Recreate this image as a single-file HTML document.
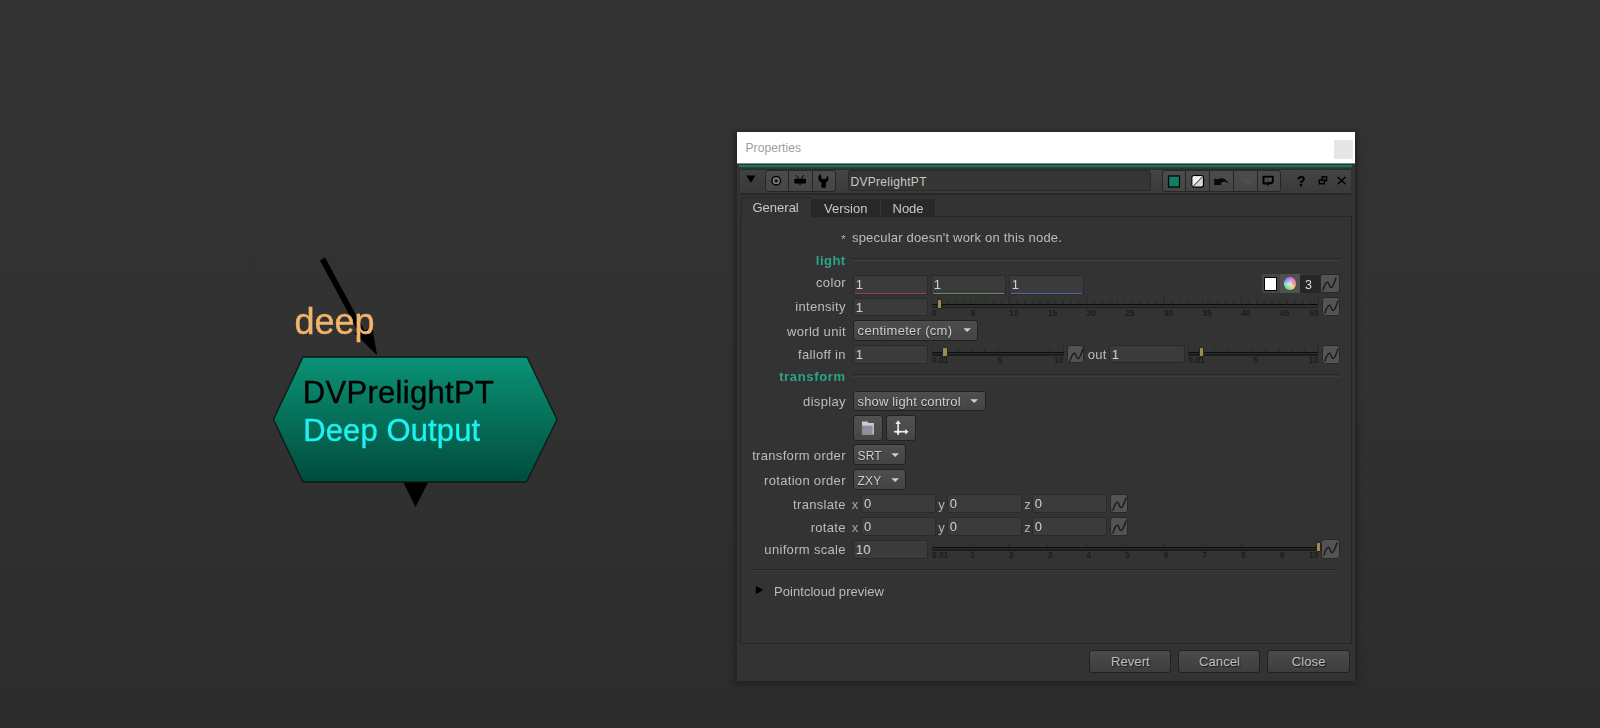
<!DOCTYPE html>
<html><head><meta charset="utf-8"><style>
html,body{margin:0;padding:0;}
body{width:1600px;height:728px;overflow:hidden;background:linear-gradient(#333333 0%,#323232 45%,#2c2c2c 100%);position:relative;font-family:'Liberation Sans', sans-serif;}
#wrap>div,#wrap>svg{position:absolute;}
</style></head><body><div id="wrap" style="position:absolute;left:0;top:0;width:1600px;height:728px;filter:blur(0.35px)">
<svg style="left:0;top:0" width="1600" height="728" viewBox="0 0 1600 728">
<defs><linearGradient id="ng" x1="0" y1="0" x2="0" y2="1">
<stop offset="0" stop-color="#0a9376"/><stop offset="1" stop-color="#004c3c"/></linearGradient></defs>
<line x1="322.5" y1="259" x2="364" y2="336" stroke="#000" stroke-width="5.8"/>
<polygon points="354,333 372.5,328 377,355" fill="#000"/>
<polygon points="303,357 527,357 557,419.5 526.5,482 303,482 273.5,419.5" fill="url(#ng)" stroke="#0d1a16" stroke-width="1.3"/>
<polygon points="403.5,482.5 428,482.5 415.5,507" fill="#000"/>
</svg>
<div style="top:303.80px;font:normal 36px/1 'Liberation Sans', sans-serif;color:#f2b46a;letter-spacing:0px;white-space:nowrap;-webkit-text-stroke:0.4px #f2b46a;left:294.50px;">deep</div>
<div style="top:376.70px;font:normal 31px/1 'Liberation Sans', sans-serif;color:#000;letter-spacing:0.3px;white-space:nowrap;-webkit-text-stroke:0.35px #000;left:302.80px;">DVPrelightPT</div>
<div style="top:415.00px;font:normal 31px/1 'Liberation Sans', sans-serif;color:#20f0f0;letter-spacing:0.1px;white-space:nowrap;-webkit-text-stroke:0.35px #20f0f0;left:303.30px;">Deep Output</div>
<div style="left:732.50px;top:131.00px;width:625.50px;height:553.50px;background:#2b2b2b;filter:blur(1px);border-radius:2px"></div>
<div style="left:737.00px;top:132.00px;width:618.00px;height:549.00px;background:#333333;box-shadow:0 2px 8px rgba(0,0,0,0.3)"></div>
<div style="left:737.00px;top:132.00px;width:618.00px;height:31.00px;background:#ffffff"></div>
<div style="top:142.00px;font:normal 12px/1 'Liberation Sans', sans-serif;color:#9d9d9d;letter-spacing:0.1px;white-space:nowrap;left:745.50px;">Properties</div>
<div style="left:1334.00px;top:139.50px;width:19.00px;height:19.50px;background:#e6e6e6"></div>
<div style="left:737.00px;top:163.00px;width:618.00px;height:0.50px;background:#7d8886"></div>
<div style="left:739.00px;top:163.50px;width:613.00px;height:1.50px;background:#1b3d34"></div>
<div style="left:739.00px;top:165.00px;width:613.00px;height:2.00px;background:#2a6b5a"></div>
<div style="left:739.00px;top:167.00px;width:613.00px;height:1.00px;background:#16483b"></div>
<div style="left:739.00px;top:168.00px;width:613.00px;height:1.00px;background:#2a3835"></div>
<div style="left:740.00px;top:169.00px;width:611.00px;height:25.50px;background:linear-gradient(#454545,#393939);border-top:1px solid #2c2c2c;border-bottom:2px solid #282828;box-sizing:border-box"></div>
<div style="left:740.50px;top:169.50px;width:24.50px;height:23.00px;background:linear-gradient(#414141,#383838)"></div>
<svg style="left:745px;top:175px" width="12" height="9"><polygon points="1.2,0.6 10.4,0.6 5.9,7.8" fill="#000"/></svg>
<div style="left:765.00px;top:170.00px;width:23.50px;height:21.50px;background:linear-gradient(#4c4c4c,#454545);border:1px solid #262626;border-radius:3px 0 0 3px;box-sizing:border-box"></div>
<div style="left:787.50px;top:170.00px;width:25.00px;height:21.50px;background:linear-gradient(#4c4c4c,#454545);border:1px solid #262626;border-radius:0;box-sizing:border-box"></div>
<div style="left:811.50px;top:170.00px;width:24.50px;height:21.50px;background:linear-gradient(#4c4c4c,#454545);border:1px solid #262626;border-radius:0 3px 3px 0;box-sizing:border-box"></div>
<svg style="left:766px;top:170px" width="22" height="21"><circle cx="10.2" cy="10.8" r="4.3" fill="#8a8a8a" stroke="#000" stroke-width="1.5"/><circle cx="10.2" cy="10.8" r="2.4" fill="#4a4a4a"/><circle cx="10.2" cy="10.8" r="1.1" fill="#000"/></svg>
<svg style="left:789px;top:170px" width="22" height="21"><rect x="5.3" y="8.7" width="11.7" height="4.8" rx="0.8" fill="#000"/><polygon points="9.6,13.4 12.6,13.4 11.1,15.2" fill="#000"/><line x1="7" y1="5" x2="9.6" y2="8.7" stroke="#000" stroke-width="1"/><line x1="14.8" y1="5" x2="12.4" y2="8.7" stroke="#000" stroke-width="1"/></svg>
<svg style="left:812px;top:170px" width="23" height="21"><path d="M8.4,3.8 L9.7,9 L14.1,9 L15.2,5.8 C17.2,7.3 17,11 14,12.4 L13.9,17.7 L9.4,17.7 L9.4,12.4 C5.6,11 5.4,5.8 8.4,3.8 Z" fill="#000"/></svg>
<div style="left:848.00px;top:170.00px;width:302.50px;height:21.20px;background:#353535;border:1px solid #2a2a2a;border-radius:3px;box-sizing:border-box"></div>
<div style="top:176.00px;font:normal 12px/1 'Liberation Sans', sans-serif;color:#c8c8c8;letter-spacing:0.3px;white-space:nowrap;left:850.50px;">DVPrelightPT</div>
<div style="left:1162.00px;top:170.00px;width:24.00px;height:21.50px;background:linear-gradient(#4c4c4c,#454545);border:1px solid #262626;border-radius:3px 0 0 3px;box-sizing:border-box"></div>
<div style="left:1185.00px;top:170.00px;width:25.00px;height:21.50px;background:linear-gradient(#4c4c4c,#454545);border:1px solid #262626;border-radius:0;box-sizing:border-box"></div>
<div style="left:1209.00px;top:170.00px;width:25.00px;height:21.50px;background:linear-gradient(#4c4c4c,#454545);border:1px solid #262626;border-radius:0;box-sizing:border-box"></div>
<div style="left:1233.00px;top:170.00px;width:25.00px;height:21.50px;background:linear-gradient(#4c4c4c,#454545);border:1px solid #262626;border-radius:0;box-sizing:border-box"></div>
<div style="left:1257.00px;top:170.00px;width:23.50px;height:21.50px;background:linear-gradient(#4c4c4c,#454545);border:1px solid #262626;border-radius:0 3px 3px 0;box-sizing:border-box"></div>
<svg style="left:1163px;top:170px" width="22" height="21"><rect x="5.5" y="6" width="11" height="11" fill="#127d66" stroke="#000" stroke-width="1.2"/></svg>
<svg style="left:1186px;top:170px" width="23" height="21"><rect x="6" y="5.6" width="11.5" height="11.5" rx="2" fill="#d8d8d8" stroke="#000" stroke-width="1.2"/><path d="M6.6,16.5 L6.6,7.5 Q6.6,6.2 7.9,6.2 L16.5,6.2 Z" fill="#f4f4f4"/><line x1="7" y1="16.5" x2="16.8" y2="6.4" stroke="#222" stroke-width="1"/></svg>
<svg style="left:1210px;top:170px" width="22" height="21"><path d="M4.2,8.8 L8.2,9.2 C11,7.4 15.5,7.8 18.6,13.4 C15.5,11.2 13,11.3 11.1,12.8 L11.3,14.9 L4.2,14.9 Z" fill="#0a0a0a"/></svg>
<svg style="left:1234px;top:170px" width="22" height="21"><path d="M18.2,8.8 L14.2,9.2 C11.4,7.4 6.9,7.8 3.8,13.4 C6.9,11.2 9.4,11.3 11.3,12.8 L11.1,14.9 L18.2,14.9 Z" fill="#505050" opacity="0.8"/></svg>
<svg style="left:1258px;top:170px" width="22" height="21"><path d="M9.2,13.5 L5.5,13.5 L5.5,6.6 L14.9,6.6 L14.9,10.8 Q14.9,13.2 12.4,13.2 L11.2,13.2" fill="none" stroke="#000" stroke-width="1.9" stroke-linejoin="round"/><polygon points="9.2,11 12.2,13.3 9.4,16.6" fill="#000"/></svg>
<div style="top:174.00px;font:bold 14px/1 'Liberation Sans', sans-serif;color:#000;letter-spacing:0px;white-space:nowrap;-webkit-text-stroke:0.3px #000;left:1001.40px;width:600px;text-align:center;">?</div>
<svg style="left:1316px;top:174px" width="14" height="14"><rect x="6.3" y="2.7" width="4.2" height="4" fill="none" stroke="#000" stroke-width="1.5"/><rect x="3.3" y="6.1" width="5" height="3.6" fill="#404040" stroke="#000" stroke-width="1.5"/></svg>
<svg style="left:1335px;top:174px" width="14" height="14"><path d="M2.7,3 L10.6,10.2 M10.6,3 L2.7,10.2" stroke="#000" stroke-width="1.5"/></svg>
<div style="left:812.00px;top:199.00px;width:67.50px;height:18.00px;background:#282828;border-radius:2px 2px 0 0"></div>
<div style="left:880.50px;top:199.00px;width:54.00px;height:18.00px;background:#282828;border-radius:2px 2px 0 0"></div>
<div style="left:740.00px;top:216.30px;width:612.00px;height:427.70px;background:#333333;border:1px solid #262626;border-top-width:1.5px;box-sizing:border-box"></div>
<div style="left:741.00px;top:196.50px;width:70.50px;height:21.50px;background:#333333;border:1px solid #272727;border-bottom:none;border-radius:3px 3px 0 0;box-sizing:border-box"></div>
<div style="top:201.00px;font:normal 13px/1 'Liberation Sans', sans-serif;color:#c8c8c8;letter-spacing:0px;white-space:nowrap;left:752.50px;">General</div>
<div style="top:202.00px;font:normal 13px/1 'Liberation Sans', sans-serif;color:#c8c8c8;letter-spacing:0px;white-space:nowrap;left:824.00px;">Version</div>
<div style="top:202.00px;font:normal 13px/1 'Liberation Sans', sans-serif;color:#c8c8c8;letter-spacing:0px;white-space:nowrap;left:892.50px;">Node</div>
<div style="top:234.00px;font:normal 11px/1 'Liberation Sans', sans-serif;color:#b8b8b8;letter-spacing:0px;white-space:nowrap;right:754.50px;">*</div>
<div style="top:231.00px;font:normal 13px/1 'Liberation Sans', sans-serif;color:#bcbcbc;letter-spacing:0.19px;white-space:nowrap;left:852.00px;">specular doesn't work on this node.</div>
<div style="top:253.80px;font:bold 13px/1 'Liberation Sans', sans-serif;color:#2aa587;letter-spacing:0.5px;white-space:nowrap;right:754.30px;">light</div>
<div style="left:852.00px;top:258.20px;width:488.00px;height:1.20px;background:#282828"></div>
<div style="left:852.00px;top:260.30px;width:488.00px;height:1.10px;background:#3d3d3d"></div>
<div style="top:276.00px;font:normal 13px/1 'Liberation Sans', sans-serif;color:#bcbcbc;letter-spacing:0.32px;white-space:nowrap;right:754.18px;">color</div>
<div style="left:853.00px;top:275.00px;width:74.50px;height:20.00px;background:#3b3b3b;border:1px solid #2a2a2a;border-radius:2px;box-sizing:border-box"></div>
<div style="left:854.50px;top:292.50px;width:71.50px;height:1.50px;background:#9a4648"></div>
<div style="top:278.00px;font:normal 13px/1 'Liberation Sans', sans-serif;color:#d2d2d2;letter-spacing:0.2px;white-space:nowrap;left:855.80px;">1</div>
<div style="left:931.00px;top:275.00px;width:74.50px;height:20.00px;background:#3b3b3b;border:1px solid #2a2a2a;border-radius:2px;box-sizing:border-box"></div>
<div style="left:932.50px;top:292.50px;width:71.50px;height:1.50px;background:#65925a"></div>
<div style="top:278.00px;font:normal 13px/1 'Liberation Sans', sans-serif;color:#d2d2d2;letter-spacing:0.2px;white-space:nowrap;left:933.80px;">1</div>
<div style="left:1009.00px;top:275.00px;width:74.50px;height:20.00px;background:#3b3b3b;border:1px solid #2a2a2a;border-radius:2px;box-sizing:border-box"></div>
<div style="left:1010.50px;top:292.50px;width:71.50px;height:1.50px;background:#4d6aa6"></div>
<div style="top:278.00px;font:normal 13px/1 'Liberation Sans', sans-serif;color:#d2d2d2;letter-spacing:0.2px;white-space:nowrap;left:1011.80px;">1</div>
<div style="left:1261.50px;top:274.00px;width:18.00px;height:19.00px;background:#474747;border-radius:2px"></div>
<div style="left:1263.50px;top:276.50px;width:13.50px;height:14.50px;background:#ffffff;border:1.5px solid #000;box-sizing:border-box"></div>
<div style="left:1280.00px;top:274.00px;width:19.50px;height:19.00px;background:#505050"></div>
<div style="left:1283.7px;top:277.2px;width:12.6px;height:12.6px;border-radius:50%;background:radial-gradient(circle,rgba(255,255,255,0.7) 0,rgba(255,255,255,0.05) 60%,rgba(255,255,255,0) 100%),conic-gradient(from 0deg,#c870e0 0deg,#e87098 80deg,#e8d070 140deg,#70e070 200deg,#70e0d0 260deg,#6a88e8 310deg,#c870e0 360deg);filter:blur(0.3px)"></div>
<div style="left:1299.50px;top:274.00px;width:20.00px;height:19.00px;background:#262626;border-top:1px solid #3a3a3a;box-sizing:border-box"></div>
<div style="top:278.50px;font:normal 12.5px/1 'Liberation Sans', sans-serif;color:#dcdcdc;letter-spacing:0px;white-space:nowrap;left:1008.60px;width:600px;text-align:center;">3</div>
<div style="left:1320.00px;top:274.00px;width:19.50px;height:19.00px;background:#535353;border:1.3px solid #282828;border-radius:3px;box-sizing:border-box"></div>
<svg style="left:1320px;top:274px" width="19.5" height="19.0"><path d="M2.9,16 C4.5,11 6,8 7.6,8.3 C9.2,8.6 9.3,14 11.2,13.6 C13.2,13.2 14.5,7.5 16,4" fill="none" stroke="#1c1c1c" stroke-width="1.5" stroke-linecap="round"/></svg>
<div style="top:300.00px;font:normal 13px/1 'Liberation Sans', sans-serif;color:#bcbcbc;letter-spacing:0.32px;white-space:nowrap;right:754.18px;">intensity</div>
<div style="left:853.00px;top:297.50px;width:74.50px;height:18.00px;background:#3b3b3b;border:1px solid #2a2a2a;border-radius:2px;box-sizing:border-box"></div>
<div style="top:300.50px;font:normal 13px/1 'Liberation Sans', sans-serif;color:#d2d2d2;letter-spacing:0.2px;white-space:nowrap;left:855.80px;">1</div>
<div style="left:932.00px;top:304.00px;width:386.40px;height:1.20px;background:#0e0e0e"></div>
<div style="left:932.00px;top:305.20px;width:386.40px;height:1.30px;background:#2a2a2a"></div>
<div style="left:932.00px;top:306.50px;width:386.40px;height:1.50px;background:#1c1c1c"></div>
<svg style="left:932px;top:294px" width="387.4" height="10"><rect x="-0.50" y="2.5" width="1" height="7.5" fill="#282828"/><rect x="7.23" y="6.4" width="1" height="3.6" fill="#282828"/><rect x="14.96" y="6.4" width="1" height="3.6" fill="#282828"/><rect x="22.68" y="6.4" width="1" height="3.6" fill="#282828"/><rect x="30.41" y="6.4" width="1" height="3.6" fill="#282828"/><rect x="38.14" y="6.4" width="1" height="3.6" fill="#282828"/><rect x="45.87" y="6.4" width="1" height="3.6" fill="#282828"/><rect x="53.60" y="6.4" width="1" height="3.6" fill="#282828"/><rect x="61.32" y="6.4" width="1" height="3.6" fill="#282828"/><rect x="69.05" y="6.4" width="1" height="3.6" fill="#282828"/><rect x="76.78" y="2.5" width="1" height="7.5" fill="#282828"/><rect x="84.51" y="6.4" width="1" height="3.6" fill="#282828"/><rect x="92.24" y="6.4" width="1" height="3.6" fill="#282828"/><rect x="99.96" y="6.4" width="1" height="3.6" fill="#282828"/><rect x="107.69" y="6.4" width="1" height="3.6" fill="#282828"/><rect x="115.42" y="6.4" width="1" height="3.6" fill="#282828"/><rect x="123.15" y="6.4" width="1" height="3.6" fill="#282828"/><rect x="130.88" y="6.4" width="1" height="3.6" fill="#282828"/><rect x="138.60" y="6.4" width="1" height="3.6" fill="#282828"/><rect x="146.33" y="6.4" width="1" height="3.6" fill="#282828"/><rect x="154.06" y="2.5" width="1" height="7.5" fill="#282828"/><rect x="161.79" y="6.4" width="1" height="3.6" fill="#282828"/><rect x="169.52" y="6.4" width="1" height="3.6" fill="#282828"/><rect x="177.24" y="6.4" width="1" height="3.6" fill="#282828"/><rect x="184.97" y="6.4" width="1" height="3.6" fill="#282828"/><rect x="192.70" y="6.4" width="1" height="3.6" fill="#282828"/><rect x="200.43" y="6.4" width="1" height="3.6" fill="#282828"/><rect x="208.16" y="6.4" width="1" height="3.6" fill="#282828"/><rect x="215.88" y="6.4" width="1" height="3.6" fill="#282828"/><rect x="223.61" y="6.4" width="1" height="3.6" fill="#282828"/><rect x="231.34" y="2.5" width="1" height="7.5" fill="#282828"/><rect x="239.07" y="6.4" width="1" height="3.6" fill="#282828"/><rect x="246.80" y="6.4" width="1" height="3.6" fill="#282828"/><rect x="254.52" y="6.4" width="1" height="3.6" fill="#282828"/><rect x="262.25" y="6.4" width="1" height="3.6" fill="#282828"/><rect x="269.98" y="6.4" width="1" height="3.6" fill="#282828"/><rect x="277.71" y="6.4" width="1" height="3.6" fill="#282828"/><rect x="285.44" y="6.4" width="1" height="3.6" fill="#282828"/><rect x="293.16" y="6.4" width="1" height="3.6" fill="#282828"/><rect x="300.89" y="6.4" width="1" height="3.6" fill="#282828"/><rect x="308.62" y="2.5" width="1" height="7.5" fill="#282828"/><rect x="316.35" y="6.4" width="1" height="3.6" fill="#282828"/><rect x="324.08" y="6.4" width="1" height="3.6" fill="#282828"/><rect x="331.80" y="6.4" width="1" height="3.6" fill="#282828"/><rect x="339.53" y="6.4" width="1" height="3.6" fill="#282828"/><rect x="347.26" y="6.4" width="1" height="3.6" fill="#282828"/><rect x="354.99" y="6.4" width="1" height="3.6" fill="#282828"/><rect x="362.72" y="6.4" width="1" height="3.6" fill="#282828"/><rect x="370.44" y="6.4" width="1" height="3.6" fill="#282828"/><rect x="378.17" y="6.4" width="1" height="3.6" fill="#282828"/><rect x="385.90" y="2.5" width="1" height="7.5" fill="#282828"/></svg>
<div style="top:308.50px;font:bold 8.5px/1 'Liberation Sans', sans-serif;color:#1c1c1c;letter-spacing:0px;white-space:nowrap;left:932.00px;">0</div>
<div style="top:308.50px;font:bold 8.5px/1 'Liberation Sans', sans-serif;color:#1c1c1c;letter-spacing:0px;white-space:nowrap;left:970.64px;">5</div>
<div style="top:308.50px;font:bold 8.5px/1 'Liberation Sans', sans-serif;color:#1c1c1c;letter-spacing:0px;white-space:nowrap;left:1009.28px;">10</div>
<div style="top:308.50px;font:bold 8.5px/1 'Liberation Sans', sans-serif;color:#1c1c1c;letter-spacing:0px;white-space:nowrap;left:1047.92px;">15</div>
<div style="top:308.50px;font:bold 8.5px/1 'Liberation Sans', sans-serif;color:#1c1c1c;letter-spacing:0px;white-space:nowrap;left:1086.56px;">20</div>
<div style="top:308.50px;font:bold 8.5px/1 'Liberation Sans', sans-serif;color:#1c1c1c;letter-spacing:0px;white-space:nowrap;left:1125.20px;">25</div>
<div style="top:308.50px;font:bold 8.5px/1 'Liberation Sans', sans-serif;color:#1c1c1c;letter-spacing:0px;white-space:nowrap;left:1163.84px;">30</div>
<div style="top:308.50px;font:bold 8.5px/1 'Liberation Sans', sans-serif;color:#1c1c1c;letter-spacing:0px;white-space:nowrap;left:1202.48px;">35</div>
<div style="top:308.50px;font:bold 8.5px/1 'Liberation Sans', sans-serif;color:#1c1c1c;letter-spacing:0px;white-space:nowrap;left:1241.12px;">40</div>
<div style="top:308.50px;font:bold 8.5px/1 'Liberation Sans', sans-serif;color:#1c1c1c;letter-spacing:0px;white-space:nowrap;left:1279.76px;">45</div>
<div style="top:308.50px;font:bold 8.5px/1 'Liberation Sans', sans-serif;color:#1c1c1c;letter-spacing:0px;white-space:nowrap;right:281.60px;">50</div>
<div style="left:937.13px;top:299.00px;width:5.20px;height:10.20px;background:#9c8a55;border:1px solid #2a2418;border-radius:1px;box-sizing:border-box"></div>
<div style="left:1321.50px;top:297.00px;width:18.50px;height:19.00px;background:#535353;border:1.3px solid #282828;border-radius:3px;box-sizing:border-box"></div>
<svg style="left:1321.5px;top:297px" width="18.5" height="19.0"><path d="M2.9,16 C4.5,11 6,8 7.6,8.3 C9.2,8.6 9.3,14 11.2,13.6 C13.2,13.2 14.5,7.5 16,4" fill="none" stroke="#1c1c1c" stroke-width="1.5" stroke-linecap="round"/></svg>
<div style="top:324.50px;font:normal 13px/1 'Liberation Sans', sans-serif;color:#bcbcbc;letter-spacing:0.32px;white-space:nowrap;right:754.18px;">world unit</div>
<div style="left:853.00px;top:319.50px;width:125.00px;height:21.50px;background:linear-gradient(#4e4e4e,#444444);border:1px solid #222222;border-radius:3px;box-sizing:border-box"></div>
<div style="top:324.10px;font:normal 13px/1 'Liberation Sans', sans-serif;color:#cfcfcf;letter-spacing:0.3px;white-space:nowrap;text-shadow:0 1px 1px #222;left:857.60px;">centimeter (cm)</div>
<svg style="left:962.7px;top:327.8px" width="9" height="5"><polygon points="0.3,0.2 8,0.2 4.15,4" fill="#cfcfcf"/></svg>
<div style="top:348.00px;font:normal 13px/1 'Liberation Sans', sans-serif;color:#bcbcbc;letter-spacing:0.32px;white-space:nowrap;right:754.18px;">falloff in</div>
<div style="left:853.00px;top:345.00px;width:74.50px;height:18.50px;background:#3b3b3b;border:1px solid #2a2a2a;border-radius:2px;box-sizing:border-box"></div>
<div style="top:348.00px;font:normal 13px/1 'Liberation Sans', sans-serif;color:#d2d2d2;letter-spacing:0.2px;white-space:nowrap;left:855.80px;">1</div>
<div style="left:932.00px;top:351.60px;width:131.50px;height:1.20px;background:#0e0e0e"></div>
<div style="left:932.00px;top:352.80px;width:131.50px;height:1.30px;background:#2a2a2a"></div>
<div style="left:932.00px;top:354.10px;width:131.50px;height:1.50px;background:#1c1c1c"></div>
<svg style="left:932px;top:341.6px" width="132.5" height="10"><rect x="-0.50" y="2.5" width="1" height="7.5" fill="#282828"/><rect x="12.53" y="6.4" width="1" height="3.6" fill="#282828"/><rect x="25.69" y="6.4" width="1" height="3.6" fill="#282828"/><rect x="38.86" y="6.4" width="1" height="3.6" fill="#282828"/><rect x="52.02" y="6.4" width="1" height="3.6" fill="#282828"/><rect x="65.18" y="6.4" width="1" height="3.6" fill="#282828"/><rect x="78.35" y="6.4" width="1" height="3.6" fill="#282828"/><rect x="91.51" y="6.4" width="1" height="3.6" fill="#282828"/><rect x="104.67" y="6.4" width="1" height="3.6" fill="#282828"/><rect x="117.84" y="6.4" width="1" height="3.6" fill="#282828"/><rect x="131.00" y="2.5" width="1" height="7.5" fill="#282828"/></svg>
<div style="top:356.10px;font:bold 8.5px/1 'Liberation Sans', sans-serif;color:#1c1c1c;letter-spacing:0px;white-space:nowrap;left:932.00px;">0.01</div>
<div style="top:356.10px;font:bold 8.5px/1 'Liberation Sans', sans-serif;color:#1c1c1c;letter-spacing:0px;white-space:nowrap;left:997.68px;">5</div>
<div style="top:356.10px;font:bold 8.5px/1 'Liberation Sans', sans-serif;color:#1c1c1c;letter-spacing:0px;white-space:nowrap;right:536.50px;">10</div>
<div style="left:942.43px;top:346.60px;width:5.20px;height:10.20px;background:#9c8a55;border:1px solid #2a2418;border-radius:1px;box-sizing:border-box"></div>
<div style="left:1066.80px;top:345.00px;width:17.40px;height:18.20px;background:#535353;border:1.3px solid #282828;border-radius:3px;box-sizing:border-box"></div>
<svg style="left:1066.8px;top:345px" width="17.4" height="18.2"><path d="M2.9,16 C4.5,11 6,8 7.6,8.3 C9.2,8.6 9.3,14 11.2,13.6 C13.2,13.2 14.5,7.5 16,4" fill="none" stroke="#1c1c1c" stroke-width="1.5" stroke-linecap="round"/></svg>
<div style="top:348.00px;font:normal 13px/1 'Liberation Sans', sans-serif;color:#bcbcbc;letter-spacing:0.2px;white-space:nowrap;left:1087.80px;">out</div>
<div style="left:1109.00px;top:344.70px;width:75.50px;height:18.60px;background:#3b3b3b;border:1px solid #2a2a2a;border-radius:2px;box-sizing:border-box"></div>
<div style="top:347.70px;font:normal 13px/1 'Liberation Sans', sans-serif;color:#d2d2d2;letter-spacing:0.2px;white-space:nowrap;left:1111.80px;">1</div>
<div style="left:1188.30px;top:351.60px;width:130.10px;height:1.20px;background:#0e0e0e"></div>
<div style="left:1188.30px;top:352.80px;width:130.10px;height:1.30px;background:#2a2a2a"></div>
<div style="left:1188.30px;top:354.10px;width:130.10px;height:1.50px;background:#1c1c1c"></div>
<svg style="left:1188.3px;top:341.6px" width="131.1" height="10"><rect x="-0.50" y="2.5" width="1" height="7.5" fill="#282828"/><rect x="12.39" y="6.4" width="1" height="3.6" fill="#282828"/><rect x="25.42" y="6.4" width="1" height="3.6" fill="#282828"/><rect x="38.44" y="6.4" width="1" height="3.6" fill="#282828"/><rect x="51.46" y="6.4" width="1" height="3.6" fill="#282828"/><rect x="64.48" y="6.4" width="1" height="3.6" fill="#282828"/><rect x="77.51" y="6.4" width="1" height="3.6" fill="#282828"/><rect x="90.53" y="6.4" width="1" height="3.6" fill="#282828"/><rect x="103.55" y="6.4" width="1" height="3.6" fill="#282828"/><rect x="116.58" y="6.4" width="1" height="3.6" fill="#282828"/><rect x="129.60" y="2.5" width="1" height="7.5" fill="#282828"/></svg>
<div style="top:356.10px;font:bold 8.5px/1 'Liberation Sans', sans-serif;color:#1c1c1c;letter-spacing:0px;white-space:nowrap;left:1188.30px;">0.01</div>
<div style="top:356.10px;font:bold 8.5px/1 'Liberation Sans', sans-serif;color:#1c1c1c;letter-spacing:0px;white-space:nowrap;left:1253.28px;">5</div>
<div style="top:356.10px;font:bold 8.5px/1 'Liberation Sans', sans-serif;color:#1c1c1c;letter-spacing:0px;white-space:nowrap;right:281.60px;">10</div>
<div style="left:1198.59px;top:346.60px;width:5.20px;height:10.20px;background:#9c8a55;border:1px solid #2a2418;border-radius:1px;box-sizing:border-box"></div>
<div style="left:1321.80px;top:345.00px;width:18.20px;height:18.50px;background:#535353;border:1.3px solid #282828;border-radius:3px;box-sizing:border-box"></div>
<svg style="left:1321.8px;top:345px" width="18.2" height="18.5"><path d="M2.9,16 C4.5,11 6,8 7.6,8.3 C9.2,8.6 9.3,14 11.2,13.6 C13.2,13.2 14.5,7.5 16,4" fill="none" stroke="#1c1c1c" stroke-width="1.5" stroke-linecap="round"/></svg>
<div style="top:369.60px;font:bold 13px/1 'Liberation Sans', sans-serif;color:#2aa587;letter-spacing:0.65px;white-space:nowrap;right:754.35px;">transform</div>
<div style="left:852.00px;top:374.20px;width:488.00px;height:1.20px;background:#282828"></div>
<div style="left:852.00px;top:376.30px;width:488.00px;height:1.10px;background:#3d3d3d"></div>
<div style="top:395.00px;font:normal 13px/1 'Liberation Sans', sans-serif;color:#bcbcbc;letter-spacing:0.32px;white-space:nowrap;right:754.18px;">display</div>
<div style="left:853.00px;top:390.80px;width:132.50px;height:19.90px;background:linear-gradient(#4e4e4e,#444444);border:1px solid #222222;border-radius:3px;box-sizing:border-box"></div>
<div style="top:395.40px;font:normal 13px/1 'Liberation Sans', sans-serif;color:#cfcfcf;letter-spacing:0.15px;white-space:nowrap;text-shadow:0 1px 1px #222;left:857.60px;">show light control</div>
<svg style="left:970.2px;top:399.1px" width="9" height="5"><polygon points="0.3,0.2 8,0.2 4.15,4" fill="#cfcfcf"/></svg>
<div style="left:852.50px;top:414.50px;width:30.00px;height:26.00px;background:linear-gradient(#515151,#464646);border:1.5px solid #222222;border-radius:3px;box-sizing:border-box"></div>
<div style="left:885.50px;top:414.50px;width:30.00px;height:26.00px;background:linear-gradient(#515151,#464646);border:1.5px solid #222222;border-radius:3px;box-sizing:border-box"></div>
<svg style="left:853px;top:415.5px" width="29" height="24"><path d="M9,5.6 L14.3,5.6 L15.8,7 L20.3,7 L20.9,7.6 L20.9,18.5 L9,18.5 Z" fill="#cacad8"/><path d="M9.2,9.6 L19.6,9.6 L19.6,18.3 L9.2,18.3 Z" fill="#8e8e9e"/><path d="M8.6,9.6 L9.6,9.6 L9.6,18.5 L8.6,18.5 Z" fill="#6e6e7e"/></svg>
<svg style="left:886px;top:415.5px" width="29" height="24"><path d="M12.1,5.5 L12.1,19" stroke="#eee" stroke-width="1.6"/><path d="M8,15.7 L21,15.7" stroke="#eee" stroke-width="1.6"/><polygon points="9.4,8 12.1,4.3 14.8,8" fill="#eee"/><polygon points="19.2,13 22.5,15.7 19.2,18.4" fill="#eee"/><polygon points="12.1,13.4 14.4,15.7 12.1,18 9.8,15.7" fill="#eee"/></svg>
<div style="top:449.00px;font:normal 13px/1 'Liberation Sans', sans-serif;color:#bcbcbc;letter-spacing:0.32px;white-space:nowrap;right:754.18px;">transform order</div>
<div style="left:853.00px;top:444.30px;width:52.80px;height:20.70px;background:linear-gradient(#4e4e4e,#444444);border:1px solid #222222;border-radius:3px;box-sizing:border-box"></div>
<div style="top:449.90px;font:normal 12px/1 'Liberation Sans', sans-serif;color:#cfcfcf;letter-spacing:0.1px;white-space:nowrap;text-shadow:0 1px 1px #222;left:857.60px;">SRT</div>
<svg style="left:890.5px;top:452.6px" width="9" height="5"><polygon points="0.3,0.2 8,0.2 4.15,4" fill="#cfcfcf"/></svg>
<div style="top:474.00px;font:normal 13px/1 'Liberation Sans', sans-serif;color:#bcbcbc;letter-spacing:0.32px;white-space:nowrap;right:754.18px;">rotation order</div>
<div style="left:853.00px;top:469.40px;width:52.80px;height:20.40px;background:linear-gradient(#4e4e4e,#444444);border:1px solid #222222;border-radius:3px;box-sizing:border-box"></div>
<div style="top:475.00px;font:normal 12px/1 'Liberation Sans', sans-serif;color:#cfcfcf;letter-spacing:0.1px;white-space:nowrap;text-shadow:0 1px 1px #222;left:857.60px;">ZXY</div>
<svg style="left:890.5px;top:477.7px" width="9" height="5"><polygon points="0.3,0.2 8,0.2 4.15,4" fill="#cfcfcf"/></svg>
<div style="top:497.60px;font:normal 13px/1 'Liberation Sans', sans-serif;color:#bcbcbc;letter-spacing:0.32px;white-space:nowrap;right:754.18px;">translate</div>
<div style="top:497.60px;font:normal 13px/1 'Liberation Sans', sans-serif;color:#a8a8a8;letter-spacing:0px;white-space:nowrap;left:851.80px;">x</div>
<div style="left:861.30px;top:494.00px;width:74.70px;height:19.00px;background:#3b3b3b;border:1px solid #2a2a2a;border-radius:2px;box-sizing:border-box"></div>
<div style="top:497.00px;font:normal 13px/1 'Liberation Sans', sans-serif;color:#d2d2d2;letter-spacing:0.2px;white-space:nowrap;left:864.10px;">0</div>
<div style="top:497.60px;font:normal 13px/1 'Liberation Sans', sans-serif;color:#b4b4b4;letter-spacing:0px;white-space:nowrap;left:938.30px;">y</div>
<div style="left:947.00px;top:494.00px;width:75.20px;height:19.00px;background:#3b3b3b;border:1px solid #2a2a2a;border-radius:2px;box-sizing:border-box"></div>
<div style="top:497.00px;font:normal 13px/1 'Liberation Sans', sans-serif;color:#d2d2d2;letter-spacing:0.2px;white-space:nowrap;left:949.80px;">0</div>
<div style="top:497.60px;font:normal 13px/1 'Liberation Sans', sans-serif;color:#b4b4b4;letter-spacing:0px;white-space:nowrap;left:1024.20px;">z</div>
<div style="left:1032.00px;top:494.00px;width:75.30px;height:19.00px;background:#3b3b3b;border:1px solid #2a2a2a;border-radius:2px;box-sizing:border-box"></div>
<div style="top:497.00px;font:normal 13px/1 'Liberation Sans', sans-serif;color:#d2d2d2;letter-spacing:0.2px;white-space:nowrap;left:1034.80px;">0</div>
<div style="left:1110.30px;top:494.00px;width:17.70px;height:19.00px;background:#535353;border:1.3px solid #282828;border-radius:3px;box-sizing:border-box"></div>
<svg style="left:1110.3px;top:494px" width="17.7" height="19.0"><path d="M2.9,16 C4.5,11 6,8 7.6,8.3 C9.2,8.6 9.3,14 11.2,13.6 C13.2,13.2 14.5,7.5 16,4" fill="none" stroke="#1c1c1c" stroke-width="1.5" stroke-linecap="round"/></svg>
<div style="top:520.50px;font:normal 13px/1 'Liberation Sans', sans-serif;color:#bcbcbc;letter-spacing:0.32px;white-space:nowrap;right:754.18px;">rotate</div>
<div style="top:520.50px;font:normal 13px/1 'Liberation Sans', sans-serif;color:#a8a8a8;letter-spacing:0px;white-space:nowrap;left:851.80px;">x</div>
<div style="left:861.30px;top:517.00px;width:74.70px;height:18.50px;background:#3b3b3b;border:1px solid #2a2a2a;border-radius:2px;box-sizing:border-box"></div>
<div style="top:520.00px;font:normal 13px/1 'Liberation Sans', sans-serif;color:#d2d2d2;letter-spacing:0.2px;white-space:nowrap;left:864.10px;">0</div>
<div style="top:520.50px;font:normal 13px/1 'Liberation Sans', sans-serif;color:#b4b4b4;letter-spacing:0px;white-space:nowrap;left:938.30px;">y</div>
<div style="left:947.00px;top:517.00px;width:75.20px;height:18.50px;background:#3b3b3b;border:1px solid #2a2a2a;border-radius:2px;box-sizing:border-box"></div>
<div style="top:520.00px;font:normal 13px/1 'Liberation Sans', sans-serif;color:#d2d2d2;letter-spacing:0.2px;white-space:nowrap;left:949.80px;">0</div>
<div style="top:520.50px;font:normal 13px/1 'Liberation Sans', sans-serif;color:#b4b4b4;letter-spacing:0px;white-space:nowrap;left:1024.20px;">z</div>
<div style="left:1032.00px;top:517.00px;width:75.30px;height:18.50px;background:#3b3b3b;border:1px solid #2a2a2a;border-radius:2px;box-sizing:border-box"></div>
<div style="top:520.00px;font:normal 13px/1 'Liberation Sans', sans-serif;color:#d2d2d2;letter-spacing:0.2px;white-space:nowrap;left:1034.80px;">0</div>
<div style="left:1110.30px;top:517.00px;width:17.70px;height:18.50px;background:#535353;border:1.3px solid #282828;border-radius:3px;box-sizing:border-box"></div>
<svg style="left:1110.3px;top:517px" width="17.7" height="18.5"><path d="M2.9,16 C4.5,11 6,8 7.6,8.3 C9.2,8.6 9.3,14 11.2,13.6 C13.2,13.2 14.5,7.5 16,4" fill="none" stroke="#1c1c1c" stroke-width="1.5" stroke-linecap="round"/></svg>
<div style="top:543.00px;font:normal 13px/1 'Liberation Sans', sans-serif;color:#bcbcbc;letter-spacing:0.32px;white-space:nowrap;right:754.18px;">uniform scale</div>
<div style="left:853.00px;top:539.50px;width:75.30px;height:19.00px;background:#3b3b3b;border:1px solid #2a2a2a;border-radius:2px;box-sizing:border-box"></div>
<div style="top:542.50px;font:normal 13px/1 'Liberation Sans', sans-serif;color:#d2d2d2;letter-spacing:0.2px;white-space:nowrap;left:855.80px;">10</div>
<div style="left:932.00px;top:546.50px;width:386.40px;height:1.20px;background:#0e0e0e"></div>
<div style="left:932.00px;top:547.70px;width:386.40px;height:1.30px;background:#2a2a2a"></div>
<div style="left:932.00px;top:549.00px;width:386.40px;height:1.50px;background:#1c1c1c"></div>
<svg style="left:932px;top:536.5px" width="387.4" height="10"><rect x="-0.50" y="4" width="1" height="6" fill="#282828"/><rect x="37.79" y="6.4" width="1" height="3.6" fill="#282828"/><rect x="76.47" y="6.4" width="1" height="3.6" fill="#282828"/><rect x="115.15" y="6.4" width="1" height="3.6" fill="#282828"/><rect x="153.83" y="6.4" width="1" height="3.6" fill="#282828"/><rect x="192.51" y="6.4" width="1" height="3.6" fill="#282828"/><rect x="231.19" y="6.4" width="1" height="3.6" fill="#282828"/><rect x="269.86" y="6.4" width="1" height="3.6" fill="#282828"/><rect x="308.54" y="6.4" width="1" height="3.6" fill="#282828"/><rect x="347.22" y="6.4" width="1" height="3.6" fill="#282828"/><rect x="385.90" y="4" width="1" height="6" fill="#282828"/></svg>
<div style="top:551.00px;font:bold 8.5px/1 'Liberation Sans', sans-serif;color:#1c1c1c;letter-spacing:0px;white-space:nowrap;left:932.00px;">0.01</div>
<div style="top:551.00px;font:bold 8.5px/1 'Liberation Sans', sans-serif;color:#1c1c1c;letter-spacing:0px;white-space:nowrap;left:970.29px;">1</div>
<div style="top:551.00px;font:bold 8.5px/1 'Liberation Sans', sans-serif;color:#1c1c1c;letter-spacing:0px;white-space:nowrap;left:1008.97px;">2</div>
<div style="top:551.00px;font:bold 8.5px/1 'Liberation Sans', sans-serif;color:#1c1c1c;letter-spacing:0px;white-space:nowrap;left:1047.65px;">3</div>
<div style="top:551.00px;font:bold 8.5px/1 'Liberation Sans', sans-serif;color:#1c1c1c;letter-spacing:0px;white-space:nowrap;left:1086.33px;">4</div>
<div style="top:551.00px;font:bold 8.5px/1 'Liberation Sans', sans-serif;color:#1c1c1c;letter-spacing:0px;white-space:nowrap;left:1125.01px;">5</div>
<div style="top:551.00px;font:bold 8.5px/1 'Liberation Sans', sans-serif;color:#1c1c1c;letter-spacing:0px;white-space:nowrap;left:1163.69px;">6</div>
<div style="top:551.00px;font:bold 8.5px/1 'Liberation Sans', sans-serif;color:#1c1c1c;letter-spacing:0px;white-space:nowrap;left:1202.36px;">7</div>
<div style="top:551.00px;font:bold 8.5px/1 'Liberation Sans', sans-serif;color:#1c1c1c;letter-spacing:0px;white-space:nowrap;left:1241.04px;">8</div>
<div style="top:551.00px;font:bold 8.5px/1 'Liberation Sans', sans-serif;color:#1c1c1c;letter-spacing:0px;white-space:nowrap;left:1279.72px;">9</div>
<div style="top:551.00px;font:bold 8.5px/1 'Liberation Sans', sans-serif;color:#1c1c1c;letter-spacing:0px;white-space:nowrap;right:281.60px;">10</div>
<div style="left:1315.50px;top:541.50px;width:5.20px;height:10.20px;background:#9c8a55;border:1px solid #2a2418;border-radius:1px;box-sizing:border-box"></div>
<div style="left:1321.40px;top:538.80px;width:18.60px;height:20.20px;background:#535353;border:1.3px solid #282828;border-radius:3px;box-sizing:border-box"></div>
<svg style="left:1321.4px;top:538.8px" width="18.6" height="20.2"><path d="M2.9,16 C4.5,11 6,8 7.6,8.3 C9.2,8.6 9.3,14 11.2,13.6 C13.2,13.2 14.5,7.5 16,4" fill="none" stroke="#1c1c1c" stroke-width="1.5" stroke-linecap="round"/></svg>
<div style="left:751.50px;top:568.50px;width:588.50px;height:1.00px;background:#272727"></div>
<div style="left:751.50px;top:569.50px;width:588.50px;height:1.00px;background:#3a3a3a"></div>
<svg style="left:755px;top:584.5px" width="10" height="11"><polygon points="0.8,0.8 8.2,5 0.8,9.3" fill="#000"/></svg>
<div style="top:584.50px;font:normal 13px/1 'Liberation Sans', sans-serif;color:#bcbcbc;letter-spacing:0.05px;white-space:nowrap;left:774.00px;">Pointcloud preview</div>
<div style="left:1088.80px;top:649.60px;width:82.20px;height:23.70px;background:#222;border-radius:3px"></div>
<div style="left:1089.80px;top:650.60px;width:80.20px;height:21.70px;background:linear-gradient(#4a4a4a,#3e3e3e);border-radius:2px"></div>
<div style="top:655.30px;font:normal 13px/1 'Liberation Sans', sans-serif;color:#c0c0c0;letter-spacing:0.1px;white-space:nowrap;text-shadow:1px 1px 1px #151515;left:830.40px;width:600px;text-align:center;">Revert</div>
<div style="left:1177.80px;top:649.60px;width:82.60px;height:23.70px;background:#222;border-radius:3px"></div>
<div style="left:1178.80px;top:650.60px;width:80.60px;height:21.70px;background:linear-gradient(#4a4a4a,#3e3e3e);border-radius:2px"></div>
<div style="top:655.30px;font:normal 13px/1 'Liberation Sans', sans-serif;color:#c0c0c0;letter-spacing:0.1px;white-space:nowrap;text-shadow:1px 1px 1px #151515;left:919.60px;width:600px;text-align:center;">Cancel</div>
<div style="left:1266.50px;top:649.60px;width:83.30px;height:23.70px;background:#222;border-radius:3px"></div>
<div style="left:1267.50px;top:650.60px;width:81.30px;height:21.70px;background:linear-gradient(#4a4a4a,#3e3e3e);border-radius:2px"></div>
<div style="top:655.30px;font:normal 13px/1 'Liberation Sans', sans-serif;color:#c0c0c0;letter-spacing:0.1px;white-space:nowrap;text-shadow:1px 1px 1px #151515;left:1008.65px;width:600px;text-align:center;">Close</div>
</div></body></html>
